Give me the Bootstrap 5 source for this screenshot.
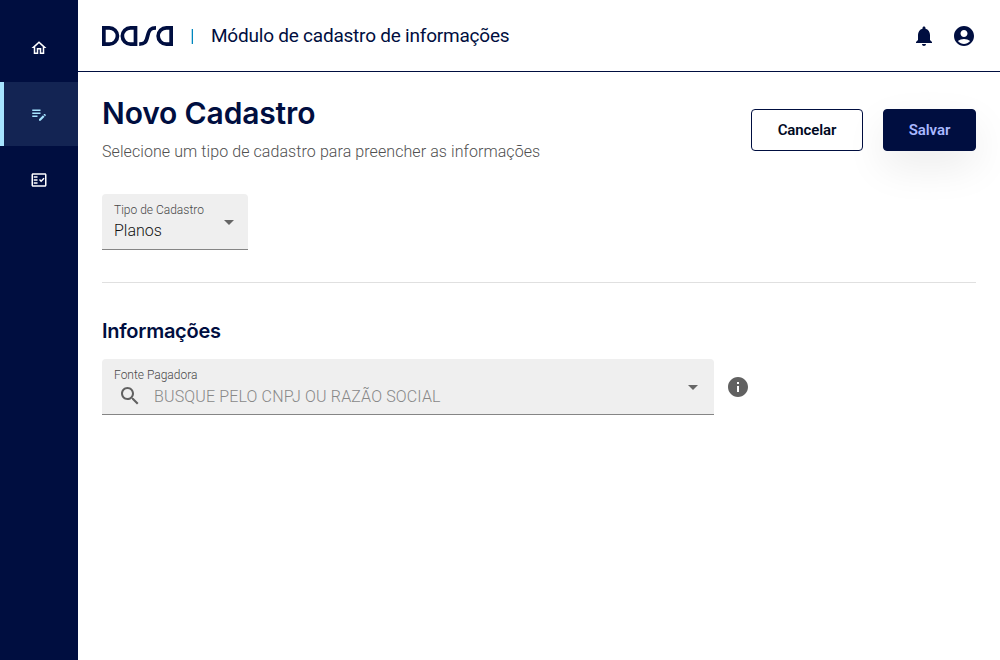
<!DOCTYPE html>
<html lang="pt-BR">
<head>
<meta charset="utf-8">
<meta name="viewport" content="width=device-width, initial-scale=1">
<title>Novo Cadastro</title>
<link href="https://cdn.jsdelivr.net/npm/bootstrap@5.3.0/dist/css/bootstrap.min.css" rel="stylesheet">
<style>
:root{--navy:#000e40}
body{font-family:Roboto,"Liberation Sans",sans-serif;color:var(--navy);height:660px;overflow:hidden}
svg{display:block;fill:currentColor;flex:none}
.side{width:78px;background:var(--navy);padding-top:16px;gap:2px}
.side .nav-link{height:64px;color:#fff;border-radius:0;padding:0;border-left:4px solid transparent;padding-right:4px}
.side .nav-link.active{color:#a6e4ff;background:#132453;border-color:#a6e4ff}
.topbar{height:72px;border-bottom:1px solid var(--navy);padding:0 24px}
.logo{fill:none;stroke:currentColor;stroke-width:3.7}
.bar-sep{width:1px;height:15px;background:#0087be;box-shadow:-1px 0 0 #b5dcec;margin:2px 0 0 19px}
.app-name{font-size:19px;line-height:24px;margin-left:18px;white-space:nowrap;letter-spacing:-.22px}
main{padding:0 24px}
h1{font:600 30px/36px Inter,sans-serif;letter-spacing:-.15px;margin:23px 0 0}
.sub{font-size:16px;line-height:24px;color:#505050;font-weight:300;margin-top:9px;white-space:nowrap;letter-spacing:.08px}
.actions{gap:20px;padding-top:37px}
.btn-dasa{width:112px;height:42px;border:1px solid var(--navy);border-radius:4px;font-weight:600;font-size:15px;padding:0;color:#00091f;letter-spacing:-.1px}
.btn-save{width:93px;background:var(--navy);color:#a9b8ff;box-shadow:0 16px 40px rgba(0,0,0,.08)}
.field{height:56px;background:#efefef;border-bottom:1px solid #858585;border-radius:4px 4px 0 0;padding:8px 14px 0 12px}
.field-type{width:146px;margin-top:30px}
.field-payer{width:612px;padding-right:16px}
.field-label{font-size:12px;line-height:16px;color:#484848;font-weight:300}
.val{font-size:16px;line-height:26px;color:#111;font-weight:300;white-space:nowrap}
.hint{color:#888;letter-spacing:.15px;line-height:24px;padding-top:2px}
.search-row{height:25px}
.arrow{border:5px solid transparent;border-top-color:#666;border-bottom:0;margin-top:18px;height:5px}
.rule{height:1px;background:#e0e0e0;margin-top:32px}
h2{font:600 20px/24px Inter,sans-serif;letter-spacing:-.25px;margin:36px 0 16px}
.gray{color:#616161}
.info{margin-left:12px}
</style>
</head>
<body class="d-flex">
<nav class="side nav flex-column flex-shrink-0">
  <a class="nav-link d-flex align-items-center justify-content-center" href="#" aria-label="Início"><svg width="18" height="18" viewBox="0 0 24 24"><path d="M12 5.69l5 4.5V18h-2v-6H9v6H7v-7.81l5-4.5M12 3L2 12h3v8h6v-6h2v6h6v-8h3L12 3z"/></svg></a>
  <a class="nav-link active d-flex align-items-center justify-content-center" href="#" aria-label="Cadastro"><svg width="18" height="18" viewBox="0 0 24 24"><path d="M3 10h11v2H3v-2zm0-2h11V6H3v2zm0 8h7v-2H3v2zm15.01-3.13.71-.71c.39-.39 1.02-.39 1.41 0l.71.71c.39.39.39 1.02 0 1.41l-.71.71-2.12-2.12zm-.71.71-5.3 5.3V21h2.12l5.3-5.3-2.12-2.12z"/></svg></a>
  <a class="nav-link d-flex align-items-center justify-content-center" href="#" aria-label="Lista"><svg width="18" height="18" viewBox="0 0 24 24"><path fill-rule="evenodd" d="M20 3H4c-1.1 0-2 .9-2 2v14c0 1.1.9 2 2 2h16c1.1 0 2-.9 2-2V5c0-1.1-.9-2-2-2zm0 16H4V5h16v14zM19.41 10.42 17.99 9l-3.17 3.17-1.41-1.42L12 12.16 14.82 15zM5 7h5v2H5zm0 4h5v2H5zm0 4h5v2H5z"/></svg></a>
</nav>
<div class="flex-grow-1">
  <header class="topbar d-flex align-items-center">
    <svg class="logo" width="71" height="20" viewBox="0 0 71 20" role="img" aria-label="Dasa"><path d="M1.85 1.85H7.3a8.15 8.15 0 0 1 0 16.3H1.85zM33.5 1.85H28.5a8.15 8.15 0 0 0 0 16.3H33.5zM37.2 18.15c5.2 0 7-1.65 8.4-8.15s3.4-8.15 8.4-8.15M69.15 1.85H64.3a8.15 8.15 0 0 0 0 16.3h4.85z"/></svg>
    <span class="bar-sep"></span>
    <span class="app-name">Módulo de cadastro de informações</span>
    <div class="d-flex gap-3 ms-auto">
      <svg width="24" height="24" viewBox="0 0 24 24"><path d="M12 22c1.1 0 2-.9 2-2h-4c0 1.1.89 2 2 2zm6-6v-5c0-3.07-1.64-5.64-4.5-6.32V4c0-.83-.67-1.5-1.5-1.5s-1.5.67-1.5 1.5v.68C7.63 5.36 6 7.92 6 11v5l-2 2v1h16v-1l-2-2z"/></svg>
      <svg width="24" height="24" viewBox="0 0 24 24"><path d="M12 2C6.48 2 2 6.48 2 12s4.48 10 10 10 10-4.48 10-10S17.52 2 12 2zm0 4c1.93 0 3.5 1.57 3.5 3.5S13.93 13 12 13s-3.5-1.57-3.5-3.5S10.07 6 12 6zm0 14c-2.03 0-4.43-.82-6.14-2.88C7.55 15.8 9.68 15 12 15s4.45.8 6.14 2.12C16.43 19.18 14.03 20 12 20z"/></svg>
    </div>
  </header>
  <main>
    <div class="d-flex justify-content-between">
      <div><h1>Novo Cadastro</h1><div class="sub">Selecione um tipo de cadastro para preencher as informações</div></div>
      <div class="actions d-flex">
        <button class="btn btn-dasa">Cancelar</button>
        <button class="btn btn-dasa btn-save">Salvar</button>
      </div>
    </div>
    <div class="field field-type d-flex justify-content-between">
      <div><div class="field-label">Tipo de Cadastro</div><div class="val">Planos</div></div>
      <span class="arrow"></span>
    </div>
    <div class="rule"></div>
    <h2>Informações</h2>
    <div class="d-flex align-items-center">
      <div class="field field-payer d-flex justify-content-between">
        <div><div class="field-label">Fonte Pagadora</div>
          <div class="search-row d-flex align-items-center ps-1">
            <svg class="gray" width="24" height="24" viewBox="0 0 24 24"><path d="M15.5 14h-.79l-.28-.27C15.41 12.59 16 11.11 16 9.5 16 5.91 13.09 3 9.5 3S3 5.91 3 9.5 5.91 16 9.5 16c1.61 0 3.09-.59 4.23-1.57l.27.28v.79l5 4.99L20.49 19l-4.99-5zm-6 0C7.01 14 5 11.99 5 9.5S7.01 5 9.5 5 14 7.01 14 9.5 11.99 14 9.5 14z"/></svg>
            <div class="val hint ms-2 ps-1">BUSQUE PELO CNPJ OU RAZÃO SOCIAL</div>
          </div>
        </div>
        <span class="arrow"></span>
      </div>
      <svg class="gray info" width="24" height="24" viewBox="0 0 24 24"><path d="M12 2C6.48 2 2 6.48 2 12s4.48 10 10 10 10-4.48 10-10S17.52 2 12 2zm1 15h-2v-6h2v6zm0-8h-2V7h2v2z"/></svg>
    </div>
  </main>
</div>
<script src="https://cdn.jsdelivr.net/npm/bootstrap@5.3.0/dist/js/bootstrap.bundle.min.js"></script>
</body>
</html>
